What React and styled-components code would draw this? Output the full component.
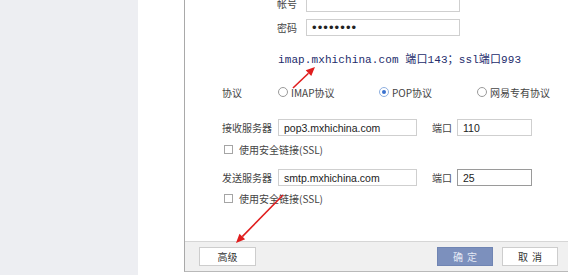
import styled, { createGlobalStyle } from "styled-components";

const GlobalStyle = createGlobalStyle`
  body {
    margin: 0;
    font-family: "Noto Sans CJK SC", "Liberation Sans", sans-serif;
    background: #fff;
  }
`;

// page frame
const Page = styled.div`
  position: relative;
  display: flex;
  width: 568px;
  height: 275px;
  overflow: hidden;
  background: #fff;
`;
const SidePane = styled.div`
  width: 138px;
  flex-shrink: 0;
  background: #edeef2;
`;
const Gutter = styled.div`
  width: 46px;
  flex-shrink: 0;
`;
const Dialog = styled.div`
  width: 384px;
  flex-shrink: 0;
  height: 271px;
  border-left: 1px solid #a9a9a9;
  border-bottom: 1px solid #b9b9b9;
  display: flex;
  flex-direction: column;
  background: #fff;
`;
const Body = styled.div`
  flex: 1;
  padding-left: 37px;
  display: flex;
  flex-direction: column;
`;

// account block at top
const TopBlock = styled.div`
  margin-left: 55px;
  margin-top: -5px;
  display: flex;
  flex-direction: column;
  gap: 7px;
`;
const CredRow = styled.div`
  display: flex;
  align-items: center;
`;
const CredLabel = styled.span`
  width: 29px;
  font-size: 10px;
  color: #444;
`;
const Input = styled.div`
  box-sizing: border-box;
  width: ${(p) => p.$w}px;
  height: 17px;
  border: 1px solid ${(p) => (p.$focus ? "#9a9a9a" : "#cfcfcf")};
  padding-left: 5px;
  display: flex;
  align-items: center;
  font-family: "Liberation Sans", sans-serif;
  font-size: 10.5px;
  color: #222;
  background: #fff;
`;
const Dots = styled.span`
  font-size: 13px;
  letter-spacing: 1.1px;
  color: #222;
`;
const Info = styled.div`
  margin-top: 10px;
  margin-left: 1px;
  height: 14px;
  line-height: 14px;
  font-family: "Liberation Mono", "Noto Sans CJK SC", monospace;
  font-size: 11px;
  letter-spacing: 0.1px;
  color: #232c6c;
  white-space: nowrap;
`;

// form rows
const Row = styled.div`
  display: flex;
  align-items: center;
  margin-top: ${(p) => p.$mt}px;
  height: ${(p) => p.$h || 17}px;
`;
const Label = styled.span`
  width: ${(p) => p.$w || 56}px;
  margin-left: ${(p) => p.$ml || 0}px;
  flex-shrink: 0;
  font-size: 10px;
  color: #444;
  white-space: nowrap;
`;
const RadioOption = styled.label`
  width: ${(p) => p.$w}px;
  display: flex;
  align-items: center;
  gap: 3px;
  font-size: 10px;
  color: #444;
  white-space: nowrap;
`;
const RadioDot = styled.span`
  box-sizing: border-box;
  width: 10px;
  height: 10px;
  border-radius: 50%;
  border: 1px solid ${(p) => (p.$on ? "#8fb0e0" : "#9a9a9a")};
  display: flex;
  align-items: center;
  justify-content: center;
  &::after {
    content: "";
    width: 4px;
    height: 4px;
    border-radius: 50%;
    background: ${(p) => (p.$on ? "#3a72cf" : "transparent")};
  }
`;
const CheckRow = styled.label`
  display: flex;
  align-items: center;
  gap: 6px;
  padding-left: 2px;
  height: 12px;
  margin-top: ${(p) => p.$mt}px;
  font-size: 10px;
  color: #444;
`;
const CheckBox = styled.span`
  box-sizing: border-box;
  width: 9px;
  height: 9px;
  border: 1px solid #a5a5a5;
  background: #fff;
`;

// footer
const Footer = styled.div`
  height: 29px;
  border-top: 1px solid #d6d6d6;
  background: #f0f0f0;
  display: flex;
  align-items: center;
  justify-content: space-between;
  padding: 0 11px 0 14px;
`;
const Actions = styled.div`
  display: flex;
  gap: 9px;
`;
const Button = styled.button`
  box-sizing: border-box;
  width: ${(p) => p.$w || 56}px;
  height: 19px;
  padding: 0;
  border: 1px solid ${(p) => (p.$primary ? "#7085b3" : "#cdcdcd")};
  background: ${(p) => (p.$primary ? "#7c90bd" : "#fff")};
  color: ${(p) => (p.$primary ? "#e4e9f4" : "#333")};
  font-family: "Noto Sans CJK SC", sans-serif;
  font-size: 10px;
  letter-spacing: ${(p) => (p.$spaced ? "4px" : "0")};
  text-indent: ${(p) => (p.$spaced ? "4px" : "0")};
`;

const Overlay = styled.svg`
  position: absolute;
  left: 0;
  top: 0;
  pointer-events: none;
`;

const Arrow = ({ x1, y1, x2, y2 }) => {
  const a = Math.atan2(y2 - y1, x2 - x1);
  const len = 9;
  const w = 4;
  const bx = x2 - Math.cos(a) * len;
  const by = y2 - Math.sin(a) * len;
  const px = -Math.sin(a) * w;
  const py = Math.cos(a) * w;
  return (
    <g>
      <line x1={x1} y1={y1} x2={bx} y2={by} stroke="#e01e1e" strokeWidth="1.6" />
      <polygon
        points={`${x2},${y2} ${bx + px},${by + py} ${bx - px},${by - py}`}
        fill="#e01e1e"
      />
    </g>
  );
};

export default function App() {
  return (
    <>
      <GlobalStyle />
      <Page>
        <SidePane />
        <Gutter />
        <Dialog>
          <Body>
            <TopBlock>
              <CredRow>
                <CredLabel>帐号</CredLabel>
                <Input $w={154} />
              </CredRow>
              <CredRow>
                <CredLabel>密码</CredLabel>
                <Input $w={154}>
                  <Dots>••••••••</Dots>
                </Input>
              </CredRow>
              <Info>imap.mxhichina.com 端口143；ssl端口993</Info>
            </TopBlock>

            <Row $mt={18} $h={14}>
              <Label>协议</Label>
              <RadioOption $w={101}>
                <RadioDot />
                IMAP协议
              </RadioOption>
              <RadioOption $w={98}>
                <RadioDot $on />
                POP协议
              </RadioOption>
              <RadioOption $w={90}>
                <RadioDot />
                网易专有协议
              </RadioOption>
            </Row>

            <Row $mt={20}>
              <Label>接收服务器</Label>
              <Input $w={139}>pop3.mxhichina.com</Input>
              <Label $w={25} $ml={15}>端口</Label>
              <Input $w={75}>110</Input>
            </Row>
            <CheckRow $mt={7}>
              <CheckBox />
              使用安全链接(SSL)
            </CheckRow>

            <Row $mt={14}>
              <Label>发送服务器</Label>
              <Input $w={139}>smtp.mxhichina.com</Input>
              <Label $w={25} $ml={15}>端口</Label>
              <Input $w={75} $focus>25</Input>
            </Row>
            <CheckRow $mt={6}>
              <CheckBox />
              使用安全链接(SSL)
            </CheckRow>
          </Body>

          <Footer>
            <Button $w={57}>高级</Button>
            <Actions>
              <Button $primary $spaced>确定</Button>
              <Button $spaced>取消</Button>
            </Actions>
          </Footer>
        </Dialog>

        <Overlay width="568" height="275" viewBox="0 0 568 275">
          <Arrow x1={293} y1={88} x2={315} y2={67} />
          <Arrow x1={283} y1={195} x2={236} y2={243} />
        </Overlay>
      </Page>
    </>
  );
}
